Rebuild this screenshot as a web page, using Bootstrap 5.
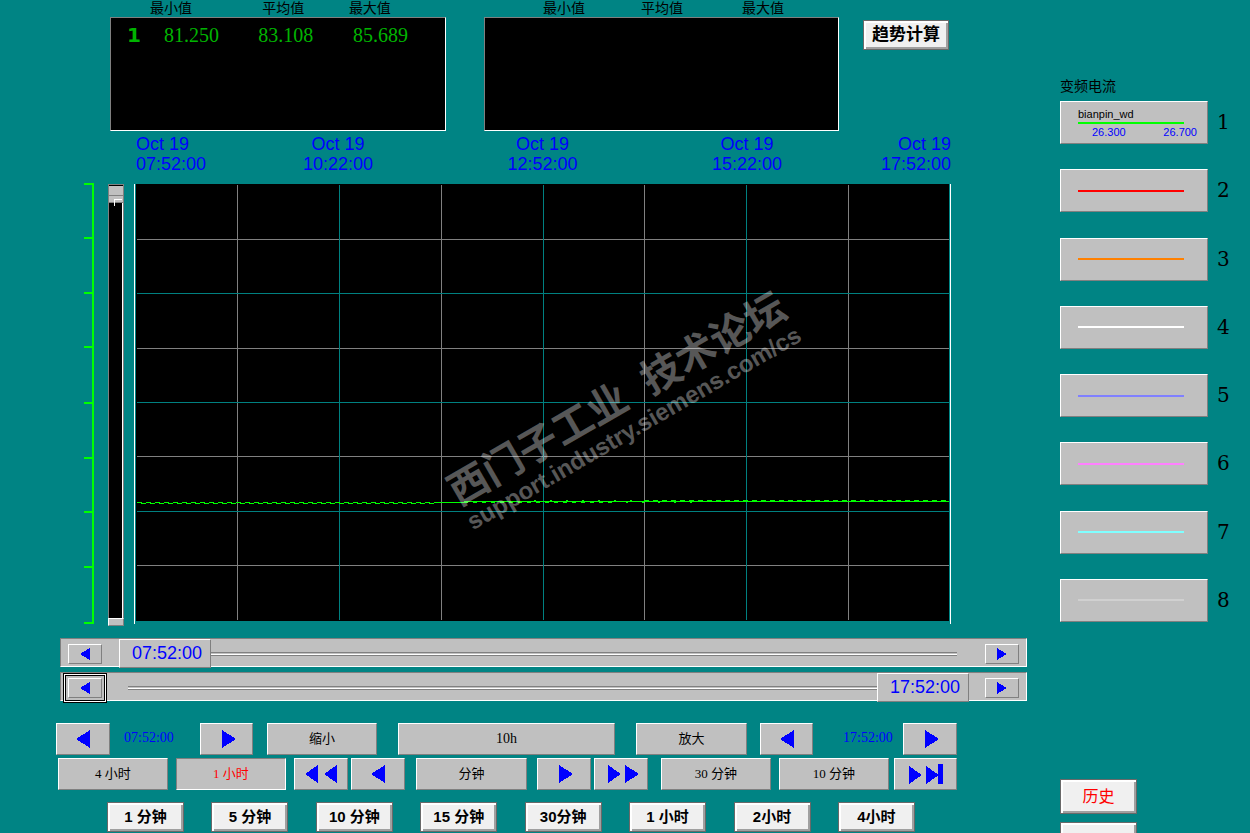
<!DOCTYPE html>
<html lang="zh-CN">
<head>
<meta charset="utf-8">
<meta name="viewport" content="width=device-width, initial-scale=1">
<title>变频电流 - 历史趋势</title>
<link href="https://cdn.jsdelivr.net/npm/bootstrap@5.3.0/dist/css/bootstrap.min.css" rel="stylesheet">
<style>
  :root { --sans: "Liberation Sans", "Noto Sans CJK SC", sans-serif; --serif: "Liberation Serif", "Noto Sans CJK SC", serif; }
  body { background: #008484; color: #000; font-family: var(--sans); font-size: 14px; line-height: 17px; }
  svg { shape-rendering: crispEdges; display: block; }
  .screen { display: grid; grid-template-columns: minmax(0, 1040fr) minmax(0, 210fr); }

  /* grids whose even tracks hold items and odd tracks are spacing */
  .track { display: grid; }
  .track > :nth-child(1) { grid-column: 2; }
  .track > :nth-child(2) { grid-column: 4; }
  .track > :nth-child(3) { grid-column: 6; }
  .track > :nth-child(4) { grid-column: 8; }
  .track > :nth-child(5) { grid-column: 10; }
  .track > :nth-child(6) { grid-column: 12; }
  .track > :nth-child(7) { grid-column: 14; }
  .track > :nth-child(8) { grid-column: 16; }
  .track > :nth-child(9) { grid-column: 18; }
  .track > :nth-child(10) { grid-column: 20; }
  .track > * { grid-row: 1; min-width: 0; }
  .cols-top { grid-template-columns: 110fr 336fr 38fr 355fr 24fr 86fr 91fr; }
  .cols-chart { grid-template-columns: 84fr 10px 14fr 16px 10fr 817fr 89fr; }
  .cols-a { grid-template-columns: 56fr 54fr 14fr 50fr 26fr 53fr 14fr 110fr 21fr 217fr 21fr 111fr 13fr 53fr 30fr 50fr 10fr 54fr 83fr; margin-top: 22px; }
  .cols-b { grid-template-columns: 58fr 110fr 8fr 110fr 8fr 54fr 3fr 54fr 11fr 111fr 10fr 54fr 3fr 54fr 13fr 110fr 8fr 110fr 5fr 63fr 83fr; margin-top: 3px; }

  /* statistics read-outs */
  .stats { table-layout: fixed; width: 100%; border-collapse: separate; border-spacing: 0; }
  .stats th { height: 17px; padding: 0; font-weight: 400; white-space: nowrap; }
  .stats td { height: 114px; padding: 7px 0 0; vertical-align: top; background: #000; color: #00b400; font: 20px/20px var(--serif); border-top: 1px solid #808080; border-bottom: 1px solid #fff; }
  .stats td:first-child { border-left: 1px solid #808080; padding-left: 16px; font: bold 20px/20px "DejaVu Sans", sans-serif; }
  .stats td:last-child { border-right: 1px solid #fff; }
  .indent-a { padding-left: 14px !important; }
  .indent-b { padding-left: 4px !important; }

  /* buttons */
  .btn { --bs-btn-border-radius: 0; --bs-btn-padding-x: 0; --bs-btn-padding-y: 0; display: flex; align-items: center; justify-content: center; white-space: nowrap; color: #000; }
  .btn-face, .btn-face:hover { height: 30px; background: #f0f0f0; color: #000; border: 1px solid #696969; box-shadow: inset 2px 2px #fff, inset -2px -2px #a0a0a0; font-size: 15px; font-weight: 700; line-height: 20px; }
  .btn-flat, .btn-flat:hover { height: 32px; background: #c0c0c0; border: 1px solid; border-color: #fff #808080 #808080 #fff; font: 13px/16px var(--serif); }
  .btn-flat.pressed { border-color: #808080 #fff #fff #808080; color: #f00; }
  .btn-calc, .btn-calc:hover { font-size: 17px; margin-top: 20px; }
  .quick { margin: 12px 125px 0 107px; }
  .quick .btn { width: 77px; }
  .btn-flat path, .scroller path { fill: #00f; }
  .big, .stamp { font-size: 14px !important; }
  .stamp { font-family: var(--serif); color: #00f; line-height: 30px; white-space: nowrap; }

  /* time axis */
  .axis-row { padding-top: 3px; }
  .chart-row { padding-top: 9px; }
  .axis { display: grid; grid-template-columns: 102fr 204fr 205fr 204fr 102fr; grid-column: 6 !important; color: #00f; font-size: 18px; line-height: 20px; text-align: center; }
  .axis > :first-child { text-align: left; padding-left: 2px; }
  .axis > :last-child { text-align: right; }

  .plot { position: relative; overflow: hidden; }
  .plot svg, .ruler svg { width: 100%; height: 443px; }
  .watermark { position: absolute; left: 60%; top: 52%; width: 480px; margin-left: -240px; margin-top: -36px; transform: rotate(-30deg); color: rgba(255, 255, 255, .35); text-align: center; white-space: nowrap; font-weight: 700; pointer-events: none; }
  .watermark div:first-child { font-size: 40px; line-height: 40px; }
  .watermark div:last-child { font-size: 24px; line-height: 28px; }

  /* ranges */
  input[type=range] { appearance: none; -webkit-appearance: none; background: none; margin: 0; padding: 0; display: block; }
  .level { position: relative; height: 443px; }
  .level input { position: absolute; top: 1px; left: 16px; width: 442px; height: 16px; transform-origin: 0 0; transform: rotate(90deg); background: #000; border: 1px solid #808080; box-shadow: inset 0 1px #fff; }
  .level input::-webkit-slider-thumb { -webkit-appearance: none; width: 18px; height: 14px; background: linear-gradient(90deg, #000 1px, #c0c0c0 1px 10px, #808080 10px 11px, #c0c0c0 11px 17px, #808080 17px); }
  .level::before { content: ""; position: absolute; z-index: 1; left: 6px; top: 16px; width: 8px; height: 7px; border: solid #fff; border-width: 1px 0 0 1px; }
  .level::after { content: ""; position: absolute; left: 0; bottom: 0; width: 16px; height: 8px; background: #c0c0c0; border: 1px solid; border-color: #fff #808080 #808080 #fff; }
  .scrollers { display: grid; gap: 5px; margin: 12px 13px 0 60px; }
  .scroller { display: grid; grid-template-columns: 7fr 34fr 17fr 850fr 16fr 34fr 7fr; align-items: center; height: 29px; background: #c0c0c0; border: 1px solid; border-color: #808080 #fff #fff #808080; }
  .scroller .btn { height: 20px; background: #c0c0c0; border: 1px solid; border-color: #fff #808080 #808080 #fff; }
  .scroller .btn.current { box-shadow: 0 0 0 2px #c0c0c0, 0 0 0 3px #000, 0 0 0 4px #fff, 0 0 0 5px #000; }
  .slide { position: relative; }
  .slide input { width: 100%; height: 29px; background: linear-gradient(#808080 0 1px, #c0c0c0 1px 2px, #fff 2px 3px, #808080 3px 4px) 9px 13px / calc(100% - 21px) 4px no-repeat; }
  .slide input::-webkit-slider-thumb { -webkit-appearance: none; width: 92px; height: 29px; background: #c0c0c0; border: 1px solid; border-color: #fff #808080 #808080 #fff; }
  .slide output { position: absolute; top: 0; left: 0; width: 92px; padding-left: 4px; line-height: 29px; font-size: 18px; color: #00f; text-align: center; pointer-events: none; }
  .slide.at-end output { left: auto; right: 0; }

  /* pen legend */
  .side { padding-left: 20px; }
  .side-title { margin: 0; padding: 78px 0 6px; font-size: 14px; line-height: 17px; font-weight: 400; }
  .pens { display: flex; flex-direction: column; justify-content: space-between; height: 521px; }
  .pens li { display: grid; grid-template-columns: 148fr 9fr 33fr; }
  .pen, .pen:hover { flex-direction: column; align-items: stretch; height: 43px; padding: 0 10px 0 17px; background: #c0c0c0; border: 1px solid; border-color: #fff #808080 #808080 #fff; font-size: 11px; line-height: 12px; text-align: left; color: #000; }
  .pen hr { margin: 0 13px 0 0; height: 2px; border: 0; opacity: 1; background: currentColor; }
  .pen .limits { color: #00f; padding-left: 14px; margin-top: 2px; }
  .pen .pen-name { height: 14px; }
  .pens li > span { grid-column: 3; font: 20px/43px "DejaVu Serif", serif; }
  .pages { padding-top: 157px; }
  .btn-page, .btn-page:hover { width: 77px; height: 35px; font-size: 16px; font-weight: 400; color: #f00; }
  .c1 { color: #0f0; } .c2 { color: #f00; } .c3 { color: #ff8000; } .c4 { color: #fff; }
  .c5 { color: #8080ff; } .c6 { color: #ff80ff; } .c7 { color: #80ffff; } .c8 { color: #d0d0d0; }
</style>
</head>
<body class="overflow-hidden">
<div class="screen vh-100 overflow-hidden">
  <main>
    <div class="track cols-top">
      <table class="stats">
        <colgroup><col style="width:11.9%"><col style="width:32.2%"><col style="width:27%"><col></colgroup>
        <thead><tr><th></th><th>最小值</th><th class="indent-b">平均值</th><th>最大值</th></tr></thead>
        <tbody><tr><td>1</td><td class="indent-a">81.250</td><td>83.108</td><td class="indent-b">85.689</td></tr></tbody>
      </table>
      <table class="stats">
        <colgroup><col style="width:16.6%"><col style="width:27.6%"><col style="width:28.5%"><col></colgroup>
        <thead><tr><th></th><th>最小值</th><th>平均值</th><th>最大值</th></tr></thead>
        <tbody><tr><td></td><td></td><td></td><td></td></tr></tbody>
      </table>
      <div><button type="button" class="btn btn-face btn-calc w-100">趋势计算</button></div>
    </div>

    <div class="track cols-chart axis-row">
      <div class="axis">
        <div>Oct 19<br>07:52:00</div><div>Oct 19<br>10:22:00</div><div>Oct 19<br>12:52:00</div><div>Oct 19<br>15:22:00</div><div>Oct 19<br>17:52:00</div>
      </div>
    </div>

    <div class="track cols-chart chart-row">
      <div class="ruler">
        <svg viewBox="0 0 10 443" preserveAspectRatio="none" aria-hidden="true"><path fill="#0f0" d="M8 0h2v441h-2zM0 0h8v2h-8zM0 54h8v2h-8zM0 109h8v2h-8zM0 163h8v2h-8zM0 219h8v2h-8zM0 274h8v2h-8zM0 328h8v2h-8zM0 383h8v2h-8zM0 439h8v2h-8z"/></svg>
      </div>
      <div class="level"><input type="range" min="0" max="100" value="0" aria-label="垂直范围"></div>
      <div class="plot">
        <svg viewBox="0 0 817 443" preserveAspectRatio="none" role="img" aria-label="趋势曲线">
          <path fill="#000" d="M2 1h813v437H2z"/>
          <path fill="#fff" d="M0 1h1v440H0zM816 1h1v440h-1z"/>
          <path fill="#808080" d="M3 56h812v1H3zM3 165h812v1H3zM3 273h812v1H3zM3 382h812v1H3zM103 2h1v435h-1zM307 2h1v435h-1zM510 2h1v435h-1zM714 2h1v435h-1z"/>
          <path fill="#008080" d="M3 110h812v1H3zM3 219h812v1H3zM3 328h812v1H3zM205 2h1v435h-1zM409 2h1v435h-1zM612 2h1v435h-1z"/>
          <g stroke="#0f0" stroke-width="1" fill="none">
            <path stroke-dasharray="5 4" d="M3 319.500H303"/>
            <path stroke-dasharray="5 4" stroke-dashoffset="5" d="M3 320.500H303"/>
            <path d="M303 319.500H330"/>
            <path stroke-dasharray="4 5" d="M330 319.500H480"/>
            <path d="M330 318.500H815"/>
            <path stroke-dasharray="2 14" d="M400 317.500H500M492 319.500H570"/>
            <path stroke-dasharray="5 4" d="M510 317.500H815"/>
          </g>
        </svg>
        <div class="watermark"><div>西门子工业&nbsp; 技术论坛</div><div>support.industry.siemens.com/cs</div></div>
      </div>
    </div>

    <div class="scrollers">
      <div class="scroller">
        <i></i>
        <button type="button" class="btn" aria-label="起点后退"><svg width="10" height="12"><path d="M0 6L10 0v12z"/></svg></button>
        <i></i>
        <div class="slide"><input type="range" min="0" max="100" value="0" aria-label="起始时间"><output>07:52:00</output></div>
        <i></i>
        <button type="button" class="btn" aria-label="起点前进"><svg width="10" height="12"><path d="M10 6L0 0v12z"/></svg></button>
      </div>
      <div class="scroller">
        <i></i>
        <button type="button" class="btn current" aria-label="终点后退"><svg width="10" height="12"><path d="M0 6L10 0v12z"/></svg></button>
        <i></i>
        <div class="slide at-end"><input type="range" min="0" max="100" value="100" aria-label="结束时间"><output>17:52:00</output></div>
        <i></i>
        <button type="button" class="btn" aria-label="终点前进"><svg width="10" height="12"><path d="M10 6L0 0v12z"/></svg></button>
      </div>
    </div>

    <div class="track cols-a">
      <button type="button" class="btn btn-flat" aria-label="起始时间减"><svg width="14" height="18"><path d="M0 9L14 0v18z"/></svg></button>
      <output class="stamp">07:52:00</output>
      <button type="button" class="btn btn-flat ps-1" aria-label="起始时间加"><svg width="14" height="18"><path d="M14 9L0 0v18z"/></svg></button>
      <button type="button" class="btn btn-flat">缩小</button>
      <button type="button" class="btn btn-flat big">10h</button>
      <button type="button" class="btn btn-flat">放大</button>
      <button type="button" class="btn btn-flat" aria-label="结束时间减"><svg width="14" height="18"><path d="M0 9L14 0v18z"/></svg></button>
      <output class="stamp">17:52:00</output>
      <button type="button" class="btn btn-flat ps-1" aria-label="结束时间加"><svg width="14" height="18"><path d="M14 9L0 0v18z"/></svg></button>
    </div>
    <div class="track cols-b">
      <button type="button" class="btn btn-flat">4 小时</button>
      <button type="button" class="btn btn-flat pressed">1 小时</button>
      <button type="button" class="btn btn-flat" aria-label="快退"><svg width="32" height="18"><path d="M0 9L13 0v18zM19 9L32 0v18z"/></svg></button>
      <button type="button" class="btn btn-flat" aria-label="后退"><svg width="14" height="18"><path d="M0 9L14 0v18z"/></svg></button>
      <button type="button" class="btn btn-flat">分钟</button>
      <button type="button" class="btn btn-flat ps-1" aria-label="前进"><svg width="14" height="18"><path d="M14 9L0 0v18z"/></svg></button>
      <button type="button" class="btn btn-flat ps-1" aria-label="快进"><svg width="31" height="18"><path d="M13 9L0 0v18zM31 9L17 0v18z"/></svg></button>
      <button type="button" class="btn btn-flat">30 分钟</button>
      <button type="button" class="btn btn-flat">10 分钟</button>
      <button type="button" class="btn btn-flat" aria-label="到末尾"><svg width="34" height="20"><path d="M13 11L0 2v18zM30 11L17 2v18zM29 0h5v20h-5z"/></svg></button>
    </div>
    <div class="quick d-flex justify-content-between">
      <button type="button" class="btn btn-face">1 分钟</button>
      <button type="button" class="btn btn-face">5 分钟</button>
      <button type="button" class="btn btn-face">10 分钟</button>
      <button type="button" class="btn btn-face">15 分钟</button>
      <button type="button" class="btn btn-face">30分钟</button>
      <button type="button" class="btn btn-face">1 小时</button>
      <button type="button" class="btn btn-face">2小时</button>
      <button type="button" class="btn btn-face">4小时</button>
    </div>
  </main>

  <aside class="side">
    <h1 class="side-title">变频电流</h1>
    <ol class="pens list-unstyled mb-0">
      <li><button type="button" class="btn pen"><div class="pen-name">bianpin_wd</div><hr class="c1"><div class="limits d-flex justify-content-between"><span>26.300</span><span>26.700</span></div></button><span>1</span></li>
      <li><button type="button" class="btn pen" aria-label="曲线 2"><hr class="c2"></button><span>2</span></li>
      <li><button type="button" class="btn pen" aria-label="曲线 3"><hr class="c3"></button><span>3</span></li>
      <li><button type="button" class="btn pen" aria-label="曲线 4"><hr class="c4"></button><span>4</span></li>
      <li><button type="button" class="btn pen" aria-label="曲线 5"><hr class="c5"></button><span>5</span></li>
      <li><button type="button" class="btn pen" aria-label="曲线 6"><hr class="c6"></button><span>6</span></li>
      <li><button type="button" class="btn pen" aria-label="曲线 7"><hr class="c7"></button><span>7</span></li>
      <li><button type="button" class="btn pen" aria-label="曲线 8"><hr class="c8"></button><span>8</span></li>
    </ol>
    <div class="pages">
      <button type="button" class="btn btn-face btn-page">历史</button>
      <button type="button" class="btn btn-face btn-page mt-2" aria-label="返回"></button>
    </div>
  </aside>
</div>
<script src="https://cdn.jsdelivr.net/npm/bootstrap@5.3.0/dist/js/bootstrap.bundle.min.js"></script>
</body>
</html>
